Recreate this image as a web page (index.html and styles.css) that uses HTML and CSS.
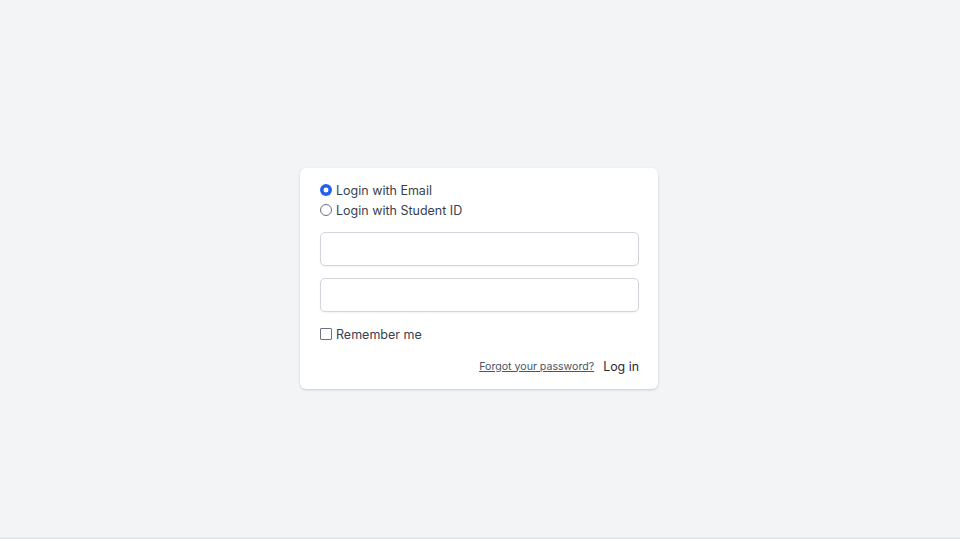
FILE: index.html
```html
<!DOCTYPE html>
<html lang="en">
<head>
<meta charset="utf-8">
<title>Log in</title>
<link rel="stylesheet" href="styles.css">
</head>
<body>
<main class="page">
  <form class="card">
    <div class="modes">
      <label class="opt"><input type="radio" name="mode" class="radio" checked><span>Login with Email</span></label>
      <label class="opt"><input type="radio" name="mode" class="radio"><span>Login with Student ID</span></label>
    </div>
    <input class="field" type="email">
    <input class="field" type="password">
    <label class="opt remember"><input type="checkbox" class="check"><span>Remember me</span></label>
    <div class="actions">
      <a class="forgot" href="#">Forgot your password?</a>
      <button type="button" class="login">Log in</button>
    </div>
  </form>
</main>
<div class="footer-bar"></div>
</body>
</html>
```
FILE: styles.css
```css
html, body {
  margin: 0;
  padding: 0;
  background: #f3f4f6;
  font-family: Inter, "Open Sans", sans-serif;
  color: #374151;
}
body {
  height: 539px;
  overflow: hidden;
  display: flex;
  flex-direction: column;
}
.page {
  flex: 1;
  display: flex;
  justify-content: flex-start;
  align-items: flex-start;
  padding: 168px 0 0 300px;
}
.card {
  width: 319px;
  background: #ffffff;
  border-radius: 6px;
  box-shadow: 0 1px 3px rgba(0,0,0,0.12), 0 1px 2px rgba(0,0,0,0.06);
  padding: 12px 19px 13px 20px;
  display: flex;
  flex-direction: column;
}
.modes {
  display: flex;
  flex-direction: column;
}
.opt {
  display: flex;
  align-items: center;
  gap: 4px;
  height: 20px;
  font-size: 12.5px;
  color: #374151;
}
.radio, .check {
  appearance: none;
  -webkit-appearance: none;
  margin: 0;
  width: 12px;
  height: 12px;
  border: 1px solid #6b7280;
  box-sizing: border-box;
  background: #fff;
  flex: none;
}
.radio { border-radius: 50%; }
.radio:checked {
  border: none;
  background: radial-gradient(circle, #fff 0 2.2px, #2563eb 2.7px);
}
.check { border-radius: 1px; }
.field {
  margin: 12px 0 0 0;
  height: 34px;
  box-sizing: border-box;
  border: 1px solid #d1d5db;
  border-radius: 5px;
  box-shadow: 0 1px 2px rgba(0,0,0,0.05);
  background: #fff;
  width: 100%;
  padding: 0 10px;
}
.remember { margin-top: 12px; }
.actions {
  margin-top: 12px;
  height: 20px;
  display: flex;
  justify-content: flex-end;
  align-items: center;
  gap: 9px;
}
.forgot {
  font-size: 10.6px;
  color: #4b5563;
  text-decoration: underline;
}
.login {
  font-family: inherit;
  font-size: 12.4px;
  color: #1f2937;
  background: none;
  border: none;
  padding: 0;
  cursor: pointer;
}
.footer-bar {
  height: 2px;
  background: #e5e7eb;
}
```
